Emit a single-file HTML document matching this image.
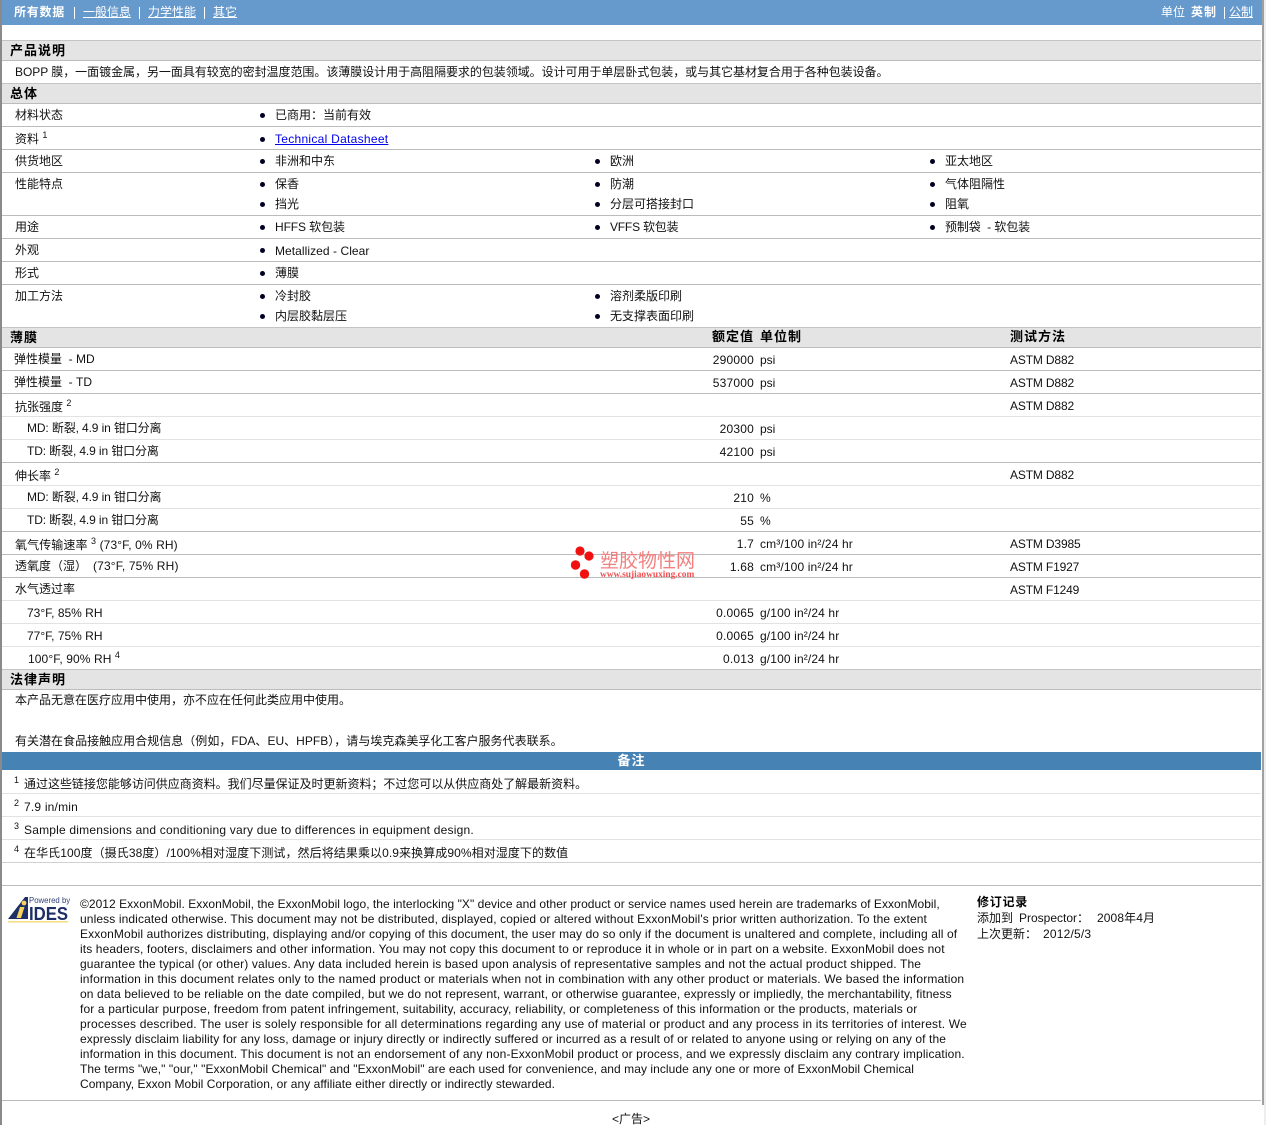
<!DOCTYPE html>
<html lang="zh"><head><meta charset="utf-8"><title>BOPP</title>
<style>
html,body{margin:0;padding:0;background:#fff}
body{position:relative;width:1266px;height:1125px;overflow:hidden;font:12px/14px "Liberation Sans","WenQuanYi Zen Hei","Noto Sans CJK SC",sans-serif;color:#111}
div{position:absolute;white-space:nowrap}
.g{left:2px;width:1259px;background:#e4e4e4;border-top:1px solid #c4c4c4;box-sizing:border-box}
.l{left:2px;width:1259px;height:1px;background:#bcbcbc}
.s{height:1px;left:2px;width:1259px;background:#e2e2e2}
.h{font-weight:bold;font-size:13px;color:#000;letter-spacing:1px}
.b{width:5px;height:5px;border-radius:50%;background:#002}
.r{text-align:right;width:80px;left:674px;letter-spacing:.2px}
.u{letter-spacing:.13px}
.t{letter-spacing:-.15px}
.m{letter-spacing:-.12px}
.f span{display:block;height:15px}
sup{font-size:9px;line-height:0;vertical-align:5px}
a{color:inherit}
</style></head><body>
<div style="left:0;top:0;width:2px;height:1125px;background:#8a8a8a"></div>
<div style="left:1262px;top:0;width:2px;height:1105px;background:#a0a0a0"></div>
<div style="left:1264px;top:0;width:2px;height:1125px;background:#eee"></div>
<div style="left:2px;top:0;width:1260px;height:25px;background:#6699cc"></div>
<div style="left:14px;top:5px;color:#fff;font-weight:bold;letter-spacing:.75px">所有数据</div>
<div style="left:74px;top:7px;width:1px;height:12px;background:#fff"></div>
<div style="left:83px;top:5px;color:#fff;text-decoration:underline">一般信息</div>
<div style="left:139px;top:7px;width:1px;height:12px;background:#fff"></div>
<div style="left:148px;top:5px;color:#fff;text-decoration:underline">力学性能</div>
<div style="left:204px;top:7px;width:1px;height:12px;background:#fff"></div>
<div style="left:213px;top:5px;color:#fff;text-decoration:underline">其它</div>
<div style="left:1161px;top:5px;color:#fff">单位</div>
<div style="left:1191px;top:5px;color:#fff;font-weight:bold;letter-spacing:1px">英制</div>
<div style="left:1224px;top:7px;width:1px;height:12px;background:#fff"></div>
<div style="left:1229px;top:5px;color:#fff;text-decoration:underline">公制</div>

<div class="g" style="top:40px;height:21px"></div><div class="h" style="left:10px;top:44px">产品说明</div>
<div class="l" style="top:60px"></div>
<div style="left:15px;top:65px;letter-spacing:-.04px">BOPP 膜，一面镀金属，另一面具有较宽的密封温度范围。该薄膜设计用于高阻隔要求的包装领域。设计可用于单层卧式包装，或与其它基材复合用于各种包装设备。</div>
<div class="g" style="top:83px;height:21px"></div><div class="h" style="left:10px;top:87px">总体</div>
<div class="l" style="top:103px"></div>

<div style="left:15px;top:108px">材料状态</div><div class="b" style="left:260px;top:113px"></div><div style="left:275px;top:108px">已商用：当前有效</div>
<div class="l" style="top:126px"></div>
<div style="left:15px;top:132px">资料 <sup>1</sup></div><div class="b" style="left:260px;top:137px"></div><div style="left:275px;top:132px;color:#00e;letter-spacing:.28px"><a href="#">Technical Datasheet</a></div>
<div class="l" style="top:149px"></div>
<div style="left:15px;top:154px">供货地区</div><div class="b" style="left:260px;top:159px"></div><div style="left:275px;top:154px">非洲和中东</div><div class="b" style="left:595px;top:159px"></div><div style="left:610px;top:154px">欧洲</div><div class="b" style="left:930px;top:159px"></div><div style="left:945px;top:154px">亚太地区</div>
<div class="l" style="top:172px"></div>
<div style="left:15px;top:177px">性能特点</div><div class="b" style="left:260px;top:182px"></div><div style="left:275px;top:177px">保香</div><div class="b" style="left:595px;top:182px"></div><div style="left:610px;top:177px">防潮</div><div class="b" style="left:930px;top:182px"></div><div style="left:945px;top:177px">气体阻隔性</div>
<div class="b" style="left:260px;top:202px"></div><div style="left:275px;top:197px">挡光</div><div class="b" style="left:595px;top:202px"></div><div style="left:610px;top:197px">分层可搭接封口</div><div class="b" style="left:930px;top:202px"></div><div style="left:945px;top:197px">阻氧</div>
<div class="l" style="top:215px"></div>
<div style="left:15px;top:220px">用途</div><div class="b" style="left:260px;top:225px"></div><div style="left:275px;top:220px;letter-spacing:-.1px">HFFS 软包装</div><div class="b" style="left:595px;top:225px"></div><div style="left:610px;top:220px;letter-spacing:-.2px">VFFS 软包装</div><div class="b" style="left:930px;top:225px"></div><div style="left:945px;top:220px;letter-spacing:-.1px">预制袋&nbsp; - 软包装</div>
<div class="l" style="top:238px"></div>
<div style="left:15px;top:243px">外观</div><div class="b" style="left:260px;top:248px"></div><div style="left:275px;top:244px;letter-spacing:.06px">Metallized - Clear</div>
<div class="l" style="top:261px"></div>
<div style="left:15px;top:266px">形式</div><div class="b" style="left:260px;top:271px"></div><div style="left:275px;top:266px">薄膜</div>
<div class="l" style="top:284px"></div>
<div style="left:15px;top:289px">加工方法</div><div class="b" style="left:260px;top:294px"></div><div style="left:275px;top:289px">冷封胶</div><div class="b" style="left:595px;top:294px"></div><div style="left:610px;top:289px">溶剂柔版印刷</div>
<div class="b" style="left:260px;top:314px"></div><div style="left:275px;top:309px">内层胶黏层压</div><div class="b" style="left:595px;top:314px"></div><div style="left:610px;top:309px">无支撑表面印刷</div>

<div class="g" style="top:327px;height:21px"></div><div class="h" style="left:10px;top:331px">薄膜</div>
<div class="h" style="left:712px;top:330px">额定值</div><div class="h" style="left:760px;top:330px">单位制</div><div class="h" style="left:1010px;top:330px">测试方法</div>
<div class="l" style="top:347px"></div>

<div style="left:14px;top:352px">弹性模量&nbsp; - MD</div><div class="r" style="top:353px">290000</div><div style="left:760px;top:353px">psi</div><div class="t" style="left:1010px;top:353px">ASTM D882</div>
<div class="l" style="top:370px"></div>
<div style="left:14px;top:375px">弹性模量&nbsp; - TD</div><div class="r" style="top:376px">537000</div><div style="left:760px;top:376px">psi</div><div class="t" style="left:1010px;top:376px">ASTM D882</div>
<div class="l" style="top:393px"></div>
<div style="left:15px;top:400px">抗张强度 <sup>2</sup></div><div class="t" style="left:1010px;top:399px">ASTM D882</div>
<div class="s" style="top:416px"></div>
<div class="m" style="left:27px;top:421px">MD: 断裂, 4.9 in 钳口分离</div><div class="r" style="top:422px">20300</div><div style="left:760px;top:422px">psi</div>
<div class="s" style="top:439px"></div>
<div class="m" style="left:27px;top:444px">TD: 断裂, 4.9 in 钳口分离</div><div class="r" style="top:445px">42100</div><div style="left:760px;top:445px">psi</div>
<div class="l" style="top:462px"></div>
<div style="left:15px;top:469px">伸长率 <sup>2</sup></div><div class="t" style="left:1010px;top:468px">ASTM D882</div>
<div class="s" style="top:485px"></div>
<div class="m" style="left:27px;top:490px">MD: 断裂, 4.9 in 钳口分离</div><div class="r" style="top:491px">210</div><div style="left:760px;top:491px">%</div>
<div class="s" style="top:508px"></div>
<div class="m" style="left:27px;top:513px">TD: 断裂, 4.9 in 钳口分离</div><div class="r" style="top:514px">55</div><div style="left:760px;top:514px">%</div>
<div class="l" style="top:531px"></div>
<div style="left:15px;top:538px;letter-spacing:.1px">氧气传输速率 <sup>3</sup> (73°F, 0% RH)</div><div class="r" style="top:537px">1.7</div><div class="u" style="left:760px;top:537px">cm³/100 in²/24 hr</div><div class="t" style="left:1010px;top:537px">ASTM D3985</div>
<div class="l" style="top:554px"></div>
<div style="left:15px;top:559px">透氧度（湿）</div><div style="left:93px;top:559px;letter-spacing:.15px">(73°F, 75% RH)</div><div class="r" style="top:560px">1.68</div><div class="u" style="left:760px;top:560px">cm³/100 in²/24 hr</div><div class="t" style="left:1010px;top:560px">ASTM F1927</div>
<div class="l" style="top:577px"></div>
<div style="left:15px;top:582px">水气透过率</div><div class="t" style="left:1010px;top:583px">ASTM F1249</div>
<div class="s" style="top:600px"></div>
<div style="left:27px;top:606px">73°F, 85% RH</div><div class="r" style="top:606px">0.0065</div><div class="u" style="left:760px;top:606px">g/100 in²/24 hr</div>
<div class="s" style="top:623px"></div>
<div style="left:27px;top:629px">77°F, 75% RH</div><div class="r" style="top:629px">0.0065</div><div class="u" style="left:760px;top:629px">g/100 in²/24 hr</div>
<div class="s" style="top:646px"></div>
<div style="left:28px;top:652px;letter-spacing:.1px">100°F, 90% RH <sup>4</sup></div><div class="r" style="top:652px">0.013</div><div class="u" style="left:760px;top:652px">g/100 in²/24 hr</div>

<div class="g" style="top:669px;height:21px"></div><div class="h" style="left:10px;top:673px">法律声明</div>
<div class="l" style="top:689px"></div>
<div style="left:15px;top:693px">本产品无意在医疗应用中使用，亦不应在任何此类应用中使用。</div>
<div style="left:15px;top:734px;letter-spacing:.02px">有关潜在食品接触应用合规信息（例如，FDA、EU、HPFB），请与埃克森美孚化工客户服务代表联系。</div>

<div style="left:2px;top:752px;width:1259px;height:18px;background:#4682b4;color:#fff;text-align:center;font-weight:bold;font-size:13px;line-height:17px;letter-spacing:1px">备注</div>
<div style="left:14px;top:777px"><sup>1</sup></div><div style="left:24px;top:777px;letter-spacing:-.02px">通过这些链接您能够访问供应商资料。我们尽量保证及时更新资料；不过您可以从供应商处了解最新资料。</div>
<div class="s" style="top:793px"></div>
<div style="left:14px;top:800px"><sup>2</sup></div><div style="left:24px;top:800px;letter-spacing:.2px">7.9 in/min</div>
<div class="s" style="top:816px"></div>
<div style="left:14px;top:823px"><sup>3</sup></div><div style="left:24px;top:823px;letter-spacing:.2px">Sample dimensions and conditioning vary due to differences in equipment design.</div>
<div class="s" style="top:839px"></div>
<div style="left:14px;top:846px"><sup>4</sup></div><div style="left:24px;top:846px;letter-spacing:.08px">在华氏100度（摄氏38度）/100%相对湿度下测试，然后将结果乘以0.9来换算成90%相对湿度下的数值</div>
<div class="l" style="top:862px;background:#d0d0d0"></div>
<div class="l" style="top:885px"></div>

<svg style="position:absolute;left:7px;top:896px" width="64" height="28" viewBox="0 0 64 28">
<path d="M1 23 L18 1 L21 1 L21 23 Z" fill="#1e2f66"/>
<path d="M13 11 L17.5 11 L14 22 L9.5 22 Z" fill="#f4d35e"/><circle cx="17" cy="7" r="2.4" fill="#f4d35e"/>
<rect x="1" y="25" width="60" height="1.5" fill="#f6dc80"/>
</svg>
<div style="left:29px;top:896px;font-size:7.8px;line-height:9px;color:#33407a">Powered by</div>
<div style="left:29px;top:904px;font-size:18px;line-height:20px;font-weight:bold;color:#1e2f66;transform-origin:left top;transform:scaleX(.93)">IDES</div>

<div class="f" style="left:80px;top:897px;line-height:15px;font-size:12px">
<span style="letter-spacing:.038px">©2012 ExxonMobil. ExxonMobil, the ExxonMobil logo, the interlocking "X" device and other product or service names used herein are trademarks of ExxonMobil,</span>
<span style="letter-spacing:.114px">unless indicated otherwise. This document may not be distributed, displayed, copied or altered without ExxonMobil's prior written authorization. To the extent</span>
<span style="letter-spacing:.115px">ExxonMobil authorizes distributing, displaying and/or copying of this document, the user may do so only if the document is unaltered and complete, including all of</span>
<span style="letter-spacing:.118px">its headers, footers, disclaimers and other information. You may not copy this document to or reproduce it in whole or in part on a website. ExxonMobil does not</span>
<span style="letter-spacing:.135px">guarantee the typical (or other) values. Any data included herein is based upon analysis of representative samples and not the actual product shipped. The</span>
<span style="letter-spacing:.145px">information in this document relates only to the named product or materials when not in combination with any other product or materials. We based the information</span>
<span style="letter-spacing:.12px">on data believed to be reliable on the date compiled, but we do not represent, warrant, or otherwise guarantee, expressly or impliedly, the merchantability, fitness</span>
<span style="letter-spacing:.143px">for a particular purpose, freedom from patent infringement, suitability, accuracy, reliability, or completeness of this information or the products, materials or</span>
<span style="letter-spacing:.17px">processes described. The user is solely responsible for all determinations regarding any use of material or product and any process in its territories of interest. We</span>
<span style="letter-spacing:.093px">expressly disclaim liability for any loss, damage or injury directly or indirectly suffered or incurred as a result of or related to anyone using or relying on any of the</span>
<span style="letter-spacing:.129px">information in this document. This document is not an endorsement of any non-ExxonMobil product or process, and we expressly disclaim any contrary implication.</span>
<span style="letter-spacing:.06px">The terms "we," "our," "ExxonMobil Chemical" and "ExxonMobil" are each used for convenience, and may include any one or more of ExxonMobil Chemical</span>
<span style="letter-spacing:.043px">Company, Exxon Mobil Corporation, or any affiliate either directly or indirectly stewarded.</span>
</div>
<div class="h" style="left:977px;top:895px;font-size:12px;letter-spacing:.75px">修订记录</div>
<div style="left:977px;top:911px">添加到</div><div style="left:1019px;top:911px">Prospector：</div><div style="left:1097px;top:911px;letter-spacing:.1px">2008年4月</div>
<div style="left:977px;top:927px">上次更新：</div><div style="left:1043px;top:927px;letter-spacing:.2px">2012/5/3</div>
<div class="l" style="top:1100px"></div>
<div style="left:612px;top:1112px">&lt;广告&gt;</div>

<svg style="position:absolute;left:570px;top:546px" width="30" height="34" viewBox="0 0 30 34">
<circle cx="10" cy="5" r="4.6" fill="#f01010"/><circle cx="19" cy="10" r="4.6" fill="#f01010"/><circle cx="5.5" cy="19" r="4.7" fill="#f01010"/><circle cx="14.5" cy="28" r="4.7" fill="#f01010"/>
</svg>
<div style="left:600px;top:552px;font-size:19px;line-height:20px;color:#f28080">塑胶物性网</div>
<div style="left:600px;top:570px;font:bold 9.4px/11px 'Liberation Serif',serif;color:#f25050">www.sujiaowuxing.com</div>
</body></html>
